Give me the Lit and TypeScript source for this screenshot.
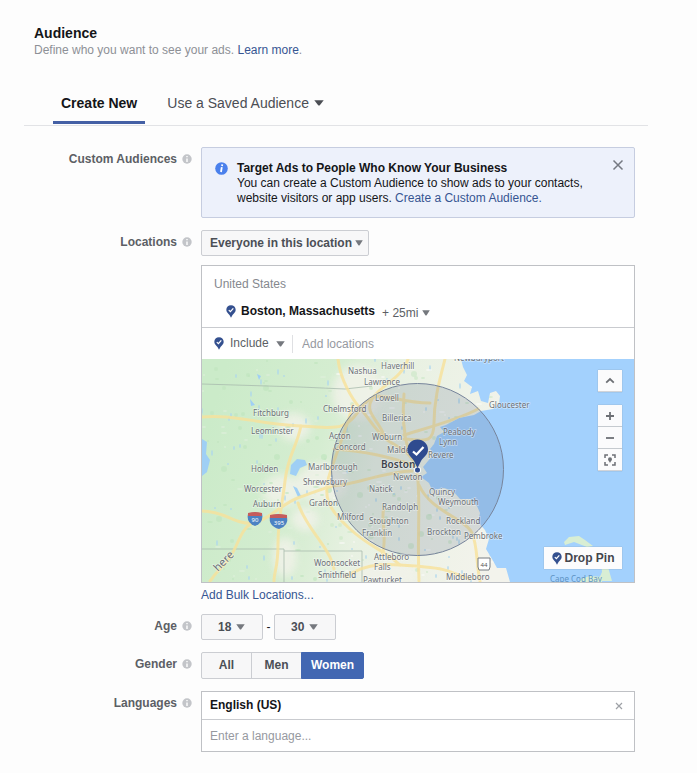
import { LitElement, html, svg, css } from "lit";
import { customElement, property, state } from "lit/decorators.js";

const caret = (w: number) => html`<svg class="caret" width=${w} height="6" viewBox="0 0 10 6" preserveAspectRatio="none" aria-hidden="true">
  <path d="M0.3 0.3h9.4L5.8 5.2Q5 6 4.2 5.2Z" fill="currentColor" />
</svg>`;

const pin = html`<svg class="pin" width="10" height="13" viewBox="0 0 10 13" aria-hidden="true">
  <path d="M5 0.3C2.3 0.3 0.3 2.3 0.3 4.9C0.3 7.2 2.4 8.4 3.5 10L5 12.7L6.5 10C7.6 8.4 9.7 7.2 9.7 4.9C9.7 2.3 7.7 0.3 5 0.3Z" fill="#34508f" />
  <path d="M2.8 5.1L4.4 6.6L7.3 3.4" fill="none" stroke="#fff" stroke-width="1.3" />
</svg>`;

type Place = [string, number, number, number?];

const PLACES: Place[] = [
  ["Nashua", 348, 375], ["Haverhill", 381, 370], ["Lawrence", 364, 386],
  ["Lowell", 375, 402], ["Chelmsford", 323, 413], ["Billerica", 382, 422],
  ["Fitchburg", 253, 417], ["Leominster", 251, 435], ["Acton", 329, 440],
  ["Concord", 334, 451], ["Woburn", 372, 441], ["Malden", 387, 454],
  ["Gloucester", 489, 409], ["Peabody", 443, 436], ["Lynn", 439, 446],
  ["Revere", 428, 459], ["Holden", 251, 473], ["Marlborough", 308, 471],
  ["Newton", 393, 481], ["Shrewsbury", 303, 486], ["Worcester", 244, 493],
  ["Natick", 369, 493], ["Auburn", 253, 508], ["Grafton", 309, 507],
  ["Quincy", 429, 496], ["Weymouth", 438, 506], ["Randolph", 382, 511],
  ["Milford", 337, 521], ["Stoughton", 369, 525], ["Rockland", 446, 525],
  ["Franklin", 362, 537], ["Brockton", 427, 536], ["Pembroke", 464, 540],
  ["Attleboro", 374, 561], ["Falls", 374, 571], ["Woonsocket", 314, 567],
  ["Smithfield", 318, 579], ["Pawtucket", 363, 584], ["Middleboro", 446, 581],
];

const ROADS = [
  "M202 418C230 415 255 424 300 427S345 430 362 408S390 404 430 404",
  "M338 360C340 380 352 400 360 409S376 432 386 440S410 450 417 470",
  "M445 360C440 380 434 400 434 424S420 440 404 440",
  "M404 436C430 428 460 420 478 410",
  "M408 360C402 380 380 386 372 400S378 420 384 436",
  "M404 395C402 420 404 436 408 450",
  "M202 512C225 512 236 526 252 524S282 504 300 498S330 486 340 486S390 472 412 472",
  "M301 427C296 450 288 456 285 482S278 520 278 545S274 572 274 582",
  "M298 504C306 530 330 548 334 570",
  "M252 524C238 532 238 552 224 566S214 578 210 582",
  "M353 406C346 430 338 450 330 474S328 510 350 530S380 548 400 566",
  "M334 450C360 452 386 456 412 466",
  "M417 472C421 500 417 530 419 582",
  "M419 486C430 512 466 520 472 534S476 564 480 582",
  "M346 578C370 560 400 566 425 568S450 574 470 580",
  "M384 508C380 520 388 540 382 556",
];

// Small ponds and parks scattered over the land, generated from a fixed seed.
const specks = (() => {
  let seed = 17;
  const next = () => (seed = (seed * 16807) % 2147483647) / 2147483647;
  return Array.from({ length: 330 }, () => ({
    x: Math.round(202 + next() * 300),
    y: Math.round(360 + next() * 222),
    r: 1 + Math.round(next() * 2),
    kind: next(),
  }));
})();

@customElement("coverage-map")
export class CoverageMap extends LitElement {
  static styles = css`
    :host { display: block; position: relative; overflow: hidden; background: #a3d1fd; }
    .canvas { display: block; width: 100%; height: auto; font-family: "Noto Sans", sans-serif; }
    .tools { position: absolute; top: 11px; right: 12px; display: flex; flex-direction: column; width: 24px; }
    .tool { display: grid; place-items: center; height: 22px; padding: 0; border: 0; border-bottom: 1px solid #d2d4d8; background: #fbfbfc; color: #6d7075; box-shadow: 0 0 1px #8b99a8; }
    .tool.up { margin-bottom: 13px; }
    .drop { position: absolute; right: 12px; bottom: 13px; display: flex; align-items: center; justify-content: center; gap: 3px; height: 22px; width: 78px; padding: 0; border: 0; background: #fcfcfd; box-shadow: 0 0 1px #8b99a8; color: #43464d; font: bold 12px "Liberation Sans", Arial, sans-serif; white-space: nowrap; }
  `;

  render() {
    return html`
      <svg class="canvas" viewBox="202 360 432 223" role="img" aria-label="Map of the Boston area">
        <defs>
          <clipPath id="land">
            <path d="M202 360H461L463 368L467 376L464 382L472 388L470 395L478 392L481 402L488 404L490 394L496 392L500 397L499 405L493 410L481 412L474 416L459 419L446 426L440 428L444 433L437 437L434 445L430 450L434 455L428 462L423 468L427 474L421 478L429 484L432 491L444 489L453 492L460 500L470 500L477 507L480 514L478 523L485 531L489 540L486 550L492 560L497 569L506 569L510 583H202Z" />
          </clipPath>
          <linearGradient id="ground" x1="0" x2="1" y1="0.4" y2="0.6">
            <stop offset="0" stop-color="#cbebc9" />
            <stop offset="0.36" stop-color="#d5edd1" />
            <stop offset="0.55" stop-color="#e8f1e2" />
            <stop offset="1" stop-color="#f3f3ec" />
          </linearGradient>
          <filter id="soft"><feGaussianBlur stdDeviation="4" /></filter>
        </defs>
        <g clip-path="url(#land)">
          <rect x="202" y="360" width="310" height="223" fill="url(#ground)" />
          <g fill="#f1f2e9" filter="url(#soft)" opacity="0.85">
            <ellipse cx="294" cy="428" rx="16" ry="14" /><ellipse cx="282" cy="492" rx="20" ry="16" />
            <ellipse cx="322" cy="484" rx="26" ry="20" /><ellipse cx="358" cy="394" rx="26" ry="28" />
            <ellipse cx="305" cy="520" rx="14" ry="12" /><ellipse cx="388" cy="575" rx="30" ry="12" />
            <ellipse cx="285" cy="558" rx="12" ry="20" />
          </g>
          ${specks.map((s) => svg`<ellipse cx=${s.x} cy=${s.y} rx=${s.kind > 0.72 ? 1 : s.r} ry=${s.kind > 0.5 ? s.r : 1}
            fill=${s.kind > 0.72 ? "#add6ee" : s.x < 330 ? (s.kind > 0.3 ? "#c0e6bf" : "#def0db") : s.kind > 0.3 ? "#cde8c9" : "#fafaf6"} opacity="0.7" />`)}
          <path d="M202 440l5 3l-1 12l4 6l-3 12l-5 4ZM291 466l6-6l8 1l2 5l-7 3l-4 8l-6-2ZM293 487l4 2l4 8l-3 1ZM257 375l4 2l-2 4ZM250 400l5 6l-4 1Z" fill="#9fcff5" />
          <g fill="none" stroke="#a9bcae" stroke-width="1" opacity="0.8">
            <path d="M202 385L300 388L345 390L372 387" /><path d="M202 550H284V583M284 552L362 552V583" />
          </g>
          <g fill="none" stroke="#f8e29a" stroke-width="3" stroke-linecap="round" opacity="0.8">
            ${ROADS.map((d) => svg`<path d=${d} />`)}
          </g>
        </g>
        <path d="M564 543l5-5l10-1l6 4l8 6l-6 1l-13-5l-9 3Z M601 558l8-2l-1 12l4 14h-14l4-9Z M580 580l10-3l12 1v5h-22Z" fill="#d8eed4" />
        <circle cx="417.5" cy="470.5" r="86" fill="#46587a" fill-opacity="0.17" stroke="#77849b" stroke-width="1" />
        <g fill="#6c7077" stroke="#fff" stroke-opacity="0.45" stroke-width="1.4" paint-order="stroke">
          ${PLACES.map(([name, x, y, size]) => svg`<text x=${x} y=${y} font-size=${size ?? 8}>${name}</text>`)}
          <text x="454" y="362" font-size="8">Newburyport</text>
          <text x="550" y="583" font-size="8" fill="#5e93c4" stroke="none">Cape Cod Bay</text>
          <text x="218" y="573" font-size="11" transform="rotate(-45 218 573)">here</text>
          <text x="381" y="469" font-size="10" font-weight="600" fill="#3f444d">Boston</text>
        </g>
        <g>
          <path d="M248 515q7-3 14 0q2 9-7 12q-9-3-7-12Z" fill="#4c82c3" /><path d="M248 514q7-2 14 0v3h-14Z" fill="#c55c5c" />
          <text x="255" y="523" font-size="6" fill="#fff" text-anchor="middle">90</text>
          <path d="M270 517q8-3 17 0q2 10-8 13q-11-3-9-13Z" fill="#4c82c3" /><path d="M270 516q8-2 17 0v3h-17Z" fill="#c55c5c" />
          <text x="279" y="526" font-size="6" fill="#fff" text-anchor="middle">395</text>
          <path d="M478 559h12v9l-1 3h-10l-1-3Z" fill="#fff" stroke="#777c82" />
          <text x="484" y="568" font-size="6" fill="#555" text-anchor="middle">44</text>
        </g>
        <circle cx="417.5" cy="471" r="3.6" fill="#fff" fill-opacity="0.8" />
        <path d="M417.5 440.5C411.5 440.5 407.5 445 407.5 450.5C407.5 456 411.5 458 414 462L417.5 469L421 462C423.5 458 428 456 428 450.5C428 445 423.5 440.5 417.5 440.5Z" fill="#2f4b8f" />
        <circle cx="417.5" cy="471" r="2.5" fill="#2f4b8f" />
        <path d="M413 452.5L416.5 455.5L423.5 448" fill="none" stroke="#fff" stroke-width="2.3" />
      </svg>
      <div class="tools">
        <button class="tool up" aria-label="Collapse map">
          <svg width="10" height="7" viewBox="0 0 10 7"><path d="M1.2 5.6L5 2L8.8 5.6" fill="none" stroke="currentColor" stroke-width="1.8" /></svg>
        </button>
        <button class="tool" aria-label="Zoom in">
          <svg width="10" height="10" viewBox="0 0 10 10"><path d="M5 1V9M1 5H9" stroke="currentColor" stroke-width="1.8" /></svg>
        </button>
        <button class="tool" aria-label="Zoom out">
          <svg width="10" height="10" viewBox="0 0 10 10"><path d="M1 5H9" stroke="currentColor" stroke-width="1.8" /></svg>
        </button>
        <button class="tool" aria-label="Fit to selection">
          <svg width="12" height="12" viewBox="0 0 12 12"><path d="M1 4V1H4M8 1H11V4M11 8V11H8M4 11H1V8" fill="none" stroke="currentColor" stroke-width="1.5" /><path d="M6 3.2a2 2 0 0 1 2 2c0 1.3-1.3 1.8-2 3.8c-.7-2-2-2.5-2-3.8a2 2 0 0 1 2-2Z" fill="currentColor" /></svg>
        </button>
      </div>
      <button class="drop">${pin} Drop Pin</button>
    `;
  }
}

@customElement("field-label")
export class FieldLabel extends LitElement {
  static styles = css`
    :host { display: flex; justify-content: flex-end; align-items: center; gap: 5px; height: 24px; color: #5c5f65; font-weight: bold; white-space: nowrap; }
    .info { display: block; }
  `;
  @property() text = "";
  render() {
    return html`<span>${this.text}</span>
      <svg class="info" width="10" height="10" viewBox="0 0 10 10" aria-hidden="true">
        <circle cx="5" cy="5" r="4.7" fill="#c3c5c9" />
        <path d="M5 2.1V3.3M5 4.4V7.9" stroke="#fff" stroke-width="1.4" />
      </svg>`;
  }
}

@customElement("app-root")
export class AppRoot extends LitElement {
  static styles = css`
    :host { display: block; min-height: 100vh; box-sizing: border-box; padding: 24px 0 20px; background: #fdfdfd; color: #141518; font: 12px/15px "Liberation Sans", Arial, sans-serif; }
    * { box-sizing: border-box; }
    button, select, input { font: inherit; color: inherit; margin: 0; }
    a { color: #365592; text-decoration: none; }
    .head { padding: 0 34px; }
    .title { margin: 0; font-size: 14px; line-height: 18px; }
    .intro { margin: 0; color: #8d9096; line-height: 16px; }
    .tabs { display: flex; gap: 8px; margin: 31px 49px 0 24px; padding-left: 29px; border-bottom: 1px solid #e2e3e6; }
    .tab { height: 35px; margin-bottom: 1px; padding: 0 8px 4px; border: 0; border-bottom: 3px solid transparent; background: none; color: #4b4e54; font-size: 14px; white-space: nowrap; }
    .tab.create { border-color: #4460a5; color: #141518; font-weight: bold; }
    .tab.saved { padding-left: 14px; }
    .tab .caret { margin-left: 1px; vertical-align: 2px; }
    .form { display: grid; grid-template-columns: 158px minmax(0, 1fr); column-gap: 9px; row-gap: 12px; padding: 21px 62px 0 34px; }
    .notice { position: relative; padding: 13px 34px 10px 35px; min-height: 71px; border: 1px solid #c6cde0; border-radius: 2px; background: #edf1fb; }
    .notice p { margin: 0; }
    .notice .strong { font-weight: bold; }
    .badge { position: absolute; left: 13px; top: 14px; }
    .close { position: absolute; right: 10px; top: 11px; width: 12px; height: 12px; padding: 0; border: 0; background: none; color: #757982; }
    .close svg, .remove svg { display: block; }
    .pick { position: relative; display: inline-flex; align-items: center; }
    .pick select { appearance: none; border: 0; padding: 0; background: none; outline: 0; }
    .pick .caret { position: absolute; right: 6px; pointer-events: none; color: #75787e; }
    .pick.boxed select { height: 26px; border: 1px solid #cbcdd2; border-radius: 2px; background: #f7f7f8; color: #4b4f56; font-weight: bold; }
    .pick.scope { margin-bottom: 9px; }
    .pick.scope select { width: 168px; padding-left: 8px; }
    .pick.age select { width: 62px; padding-left: 16px; }
    .pick.age .caret { right: 18px; }
    .places, .langs { border: 1px solid #bfc1c5; background: #fff; }
    .chosen { padding: 11px 12px 6px; min-height: 61px; }
    .country { color: #85888e; }
    .city { display: flex; align-items: center; gap: 5px; margin-top: 10px; padding-left: 12px; }
    .city strong { margin-right: 2px; }
    .radius { padding-top: 4px; color: #5c5f65; }
    .radius select { width: 48px; }
    .radius .caret { right: 0; bottom: 5px; }
    .adder { display: flex; align-items: center; height: 32px; padding: 0 12px; border-top: 1px solid #c9cbcf; }
    .mode { margin-left: 6px; color: #5c5f65; }
    .mode select { width: 55px; }
    .mode .caret { right: 0; }
    .entry { flex: 1; min-width: 0; height: 18px; border: 0; padding: 0; background: none; outline: 0; }
    .entry::placeholder { color: #96999f; opacity: 1; }
    .adder .entry { margin-left: 7px; padding-left: 9px; border-left: 1px solid #dfe0e3; }
    .bulk { display: block; margin-top: 5px; line-height: 14px; }
    .ages { display: flex; align-items: center; height: 26px; }
    .dash { width: 11px; text-align: center; }
    .gender { display: flex; margin: 0; padding: 0; border: 0; }
    .option { position: relative; display: grid; place-items: center; width: 51px; height: 27px; border: 1px solid #cbcdd2; margin-right: -1px; background: #f7f7f8; color: #4b4f56; font-weight: bold; }
    .option:first-child { border-radius: 2px 0 0 2px; }
    .option:last-child { width: 63px; border-radius: 0 2px 2px 0; }
    .option.on { border-color: #4267b2; background: #4267b2; color: #fff; }
    .option input { position: absolute; inset: 0; width: 100%; height: 100%; opacity: 0; }
    .lang { display: flex; align-items: center; justify-content: space-between; height: 28px; padding: 0 11px 0 8px; border-bottom: 1px solid #c9cbcf; }
    .remove { width: 8px; height: 8px; padding: 0; border: 0; background: none; color: #9ea1a6; }
    .new { display: flex; align-items: center; height: 31px; padding: 0 8px; }
  `;

  @state() private gender = "Women";

  private cross(size: number, weight: number) {
    return html`<svg width=${size} height=${size} viewBox="0 0 12 12"><path d="M1.5 1.5L10.5 10.5M10.5 1.5L1.5 10.5" stroke="currentColor" stroke-width=${weight} /></svg>`;
  }

  render() {
    return html`
      <header class="head">
        <h1 class="title">Audience</h1>
        <p class="intro">Define who you want to see your ads. <a href="#learn">Learn more</a>.</p>
      </header>
      <nav class="tabs">
        <button class="tab create">Create New</button>
        <button class="tab saved">Use a Saved Audience ${caret(10)}</button>
      </nav>
      <main class="form">
        <field-label text="Custom Audiences"></field-label>
        <section class="notice">
          <svg class="badge" width="13" height="13" viewBox="0 0 13 13" aria-hidden="true">
            <circle cx="6.5" cy="6.5" r="6.3" fill="#4a80ec" />
            <path d="M7.3 2.4L7 4M6.8 5.2L6 10" stroke="#fff" stroke-width="1.8" />
          </svg>
          <p class="strong">Target Ads to People Who Know Your Business</p>
          <p>You can create a Custom Audience to show ads to your contacts, website visitors or app users. <a href="#custom">Create a Custom Audience.</a></p>
          <button class="close" aria-label="Dismiss">${this.cross(12, 1.5)}</button>
        </section>

        <field-label text="Locations"></field-label>
        <div>
          <span class="pick boxed scope">
            <select aria-label="Locations"><option>Everyone in this location</option></select>${caret(8)}
          </span>
          <div class="places">
            <div class="chosen">
              <div class="country">United States</div>
              <div class="city">${pin}<strong>Boston, Massachusetts</strong>
                <span class="pick radius"><select aria-label="Radius"><option>+ 25mi</option></select>${caret(8)}</span>
              </div>
            </div>
            <div class="adder">${pin}
              <span class="pick mode"><select aria-label="Include or exclude"><option>Include</option><option>Exclude</option></select>${caret(9)}</span>
              <input class="entry" aria-label="Add locations" placeholder="Add locations" />
            </div>
            <coverage-map></coverage-map>
          </div>
          <a class="bulk" href="#bulk">Add Bulk Locations...</a>
        </div>

        <field-label text="Age"></field-label>
        <div class="ages">
          <span class="pick boxed age"><select aria-label="Minimum age"><option>18</option></select>${caret(9)}</span>
          <span class="dash">-</span>
          <span class="pick boxed age"><select aria-label="Maximum age"><option>30</option></select>${caret(9)}</span>
        </div>

        <field-label text="Gender"></field-label>
        <fieldset class="gender" aria-label="Gender">
          ${["All", "Men", "Women"].map((g) => html`
            <label class="option ${g === this.gender ? "on" : ""}">
              <input type="radio" name="gender" .checked=${g === this.gender} @change=${() => (this.gender = g)} />${g}
            </label>`)}
        </fieldset>

        <field-label text="Languages"></field-label>
        <div class="langs">
          <div class="lang"><strong>English (US)</strong>
            <button class="remove" aria-label="Remove English (US)">${this.cross(8, 1.8)}</button>
          </div>
          <div class="new"><input class="entry" aria-label="Language" placeholder="Enter a language..." /></div>
        </div>
      </main>
    `;
  }
}
